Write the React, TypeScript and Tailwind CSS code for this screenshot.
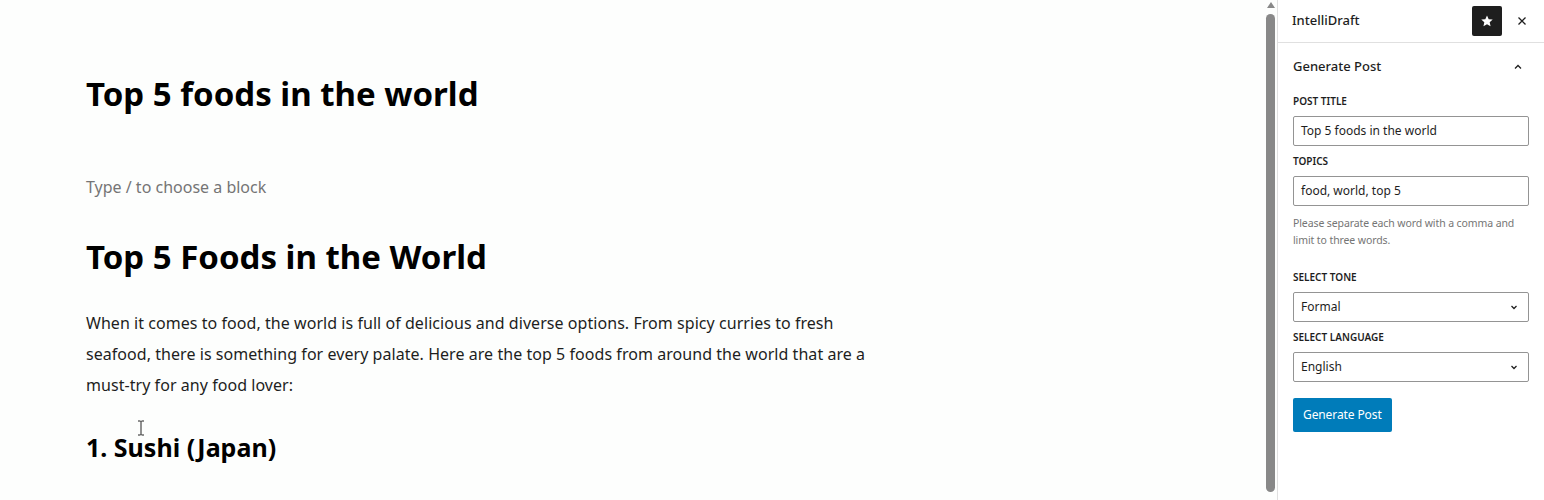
import React from "react";

const font = { fontFamily: '"Noto Sans", "Open Sans", sans-serif' };

function Chevron() {
  return (
    <svg width="12" height="12" viewBox="0 0 24 24" fill="none" stroke="#1e1e1e" strokeWidth="2.5">
      <path d="M7 10l5 5 5-5" />
    </svg>
  );
}

function Field({ label, value, select }: { label: string; value: string; select?: boolean }) {
  return (
    <div className="flex flex-col">
      <div className="text-[10px] font-semibold uppercase text-[#1e1e1e] leading-[14px] mb-[8px]">{label}</div>
      <div className="h-[30px] border border-[#949494] rounded-[2px] bg-white flex items-center justify-between pl-[7px] pr-[8px] text-[12px] text-[#1e1e1e]">
        <span>{value}</span>
        {select && <Chevron />}
      </div>
    </div>
  );
}

export default function App() {
  return (
    <div className="w-[1544px] h-[500px] flex bg-[#fdfefd] overflow-hidden relative" style={font}>
      <main className="w-[1264px] h-full pl-[86px] pt-[72px] text-[#1e1e1e]">
        <h1 className="text-[33px] font-bold leading-[44px] text-black">Top 5 foods in the world</h1>
        <p className="text-[16px] text-[#757575] mt-[59px] leading-[24px]">Type / to choose a block</p>
        <h2 className="text-[33px] font-bold leading-[44px] text-black mt-[36px]">Top 5 Foods in the World</h2>
        <p className="text-[16px] leading-[31px] mt-[29px] w-[800px] text-[#1e1e1e] tracking-[0.05px]">
          When it comes to food, the world is full of delicious and diverse options. From spicy curries to fresh seafood, there is something for every palate. Here are the top 5 foods from around the world that are a must-try for any food lover:
        </p>
        <h3 className="text-[25px] font-bold leading-[32px] text-black mt-[30px]">1. Sushi (Japan)</h3>
      </main>
      <div className="w-[13px] h-full flex flex-col items-center pt-[2px] pb-[8px]">
        <svg width="8" height="6" viewBox="0 0 8 6" className="mb-[6px]"><path d="M4 0L8 6H0z" fill="#888" /></svg>
        <div className="w-[9px] flex-1 rounded-full bg-[#888888]" />
      </div>
      <aside className="w-[267px] h-full border-l border-[#e0e0e0] bg-white flex flex-col">
        <div className="h-[43px] border-b border-[#e0e0e0] flex items-center pl-[14px] pr-[16px]">
          <span className="text-[13px] font-medium text-[#1e1e1e] flex-1">IntelliDraft</span>
          <div className="w-[30px] h-[30px] bg-[#1e1e1e] rounded-[2px] flex items-center justify-center mr-[14px]">
            <svg width="14" height="14" viewBox="0 0 24 24"><path d="M12 2.5l2.9 6.3 6.9.7-5.2 4.6 1.5 6.8L12 17.4l-6.1 3.5 1.5-6.8-5.2-4.6 6.9-.7z" fill="#fff" /></svg>
          </div>
          <svg width="12" height="12" viewBox="0 0 24 24" stroke="#1e1e1e" strokeWidth="2.5"><path d="M5 5l14 14M19 5L5 19" /></svg>
        </div>
        <div className="px-[15px] pt-[15px]">
          <div className="flex items-center justify-between h-[18px]">
            <span className="text-[13px] font-medium text-[#1e1e1e]">Generate Post</span>
            <svg width="12" height="12" viewBox="0 0 24 24" fill="none" stroke="#1e1e1e" strokeWidth="2.5" className="mr-[5px]"><path d="M6 15l6-6 6 6" /></svg>
          </div>
          <div className="mt-[18px] flex flex-col gap-[8px]">
            <Field label="Post title" value="Top 5 foods in the world" />
            <Field label="Topics" value="food, world, top 5" />
          </div>
          <p className="text-[10.5px] leading-[17px] text-[#757575] mt-[9px] tracking-[-0.1px]">Please separate each word with a comma and limit to three words.</p>
          <div className="mt-[21px] flex flex-col gap-[8px]">
            <Field label="Select tone" value="Formal" select />
            <Field label="Select language" value="English" select />
          </div>
          <button className="mt-[16px] h-[34px] px-[10px] bg-[#007cba] text-white text-[12px] rounded-[2px] tracking-[-0.1px]">Generate Post</button>
        </div>
      </aside>
      <svg className="absolute left-[137px] top-[420px]" width="8" height="16" viewBox="0 0 8 16" fill="none" stroke="#222" strokeWidth="1"><path d="M1 1h2.5l.5.5.5-.5H7M4 1.5v13M1 15h2.5l.5-.5.5.5H7" /></svg>
    </div>
  );
}
